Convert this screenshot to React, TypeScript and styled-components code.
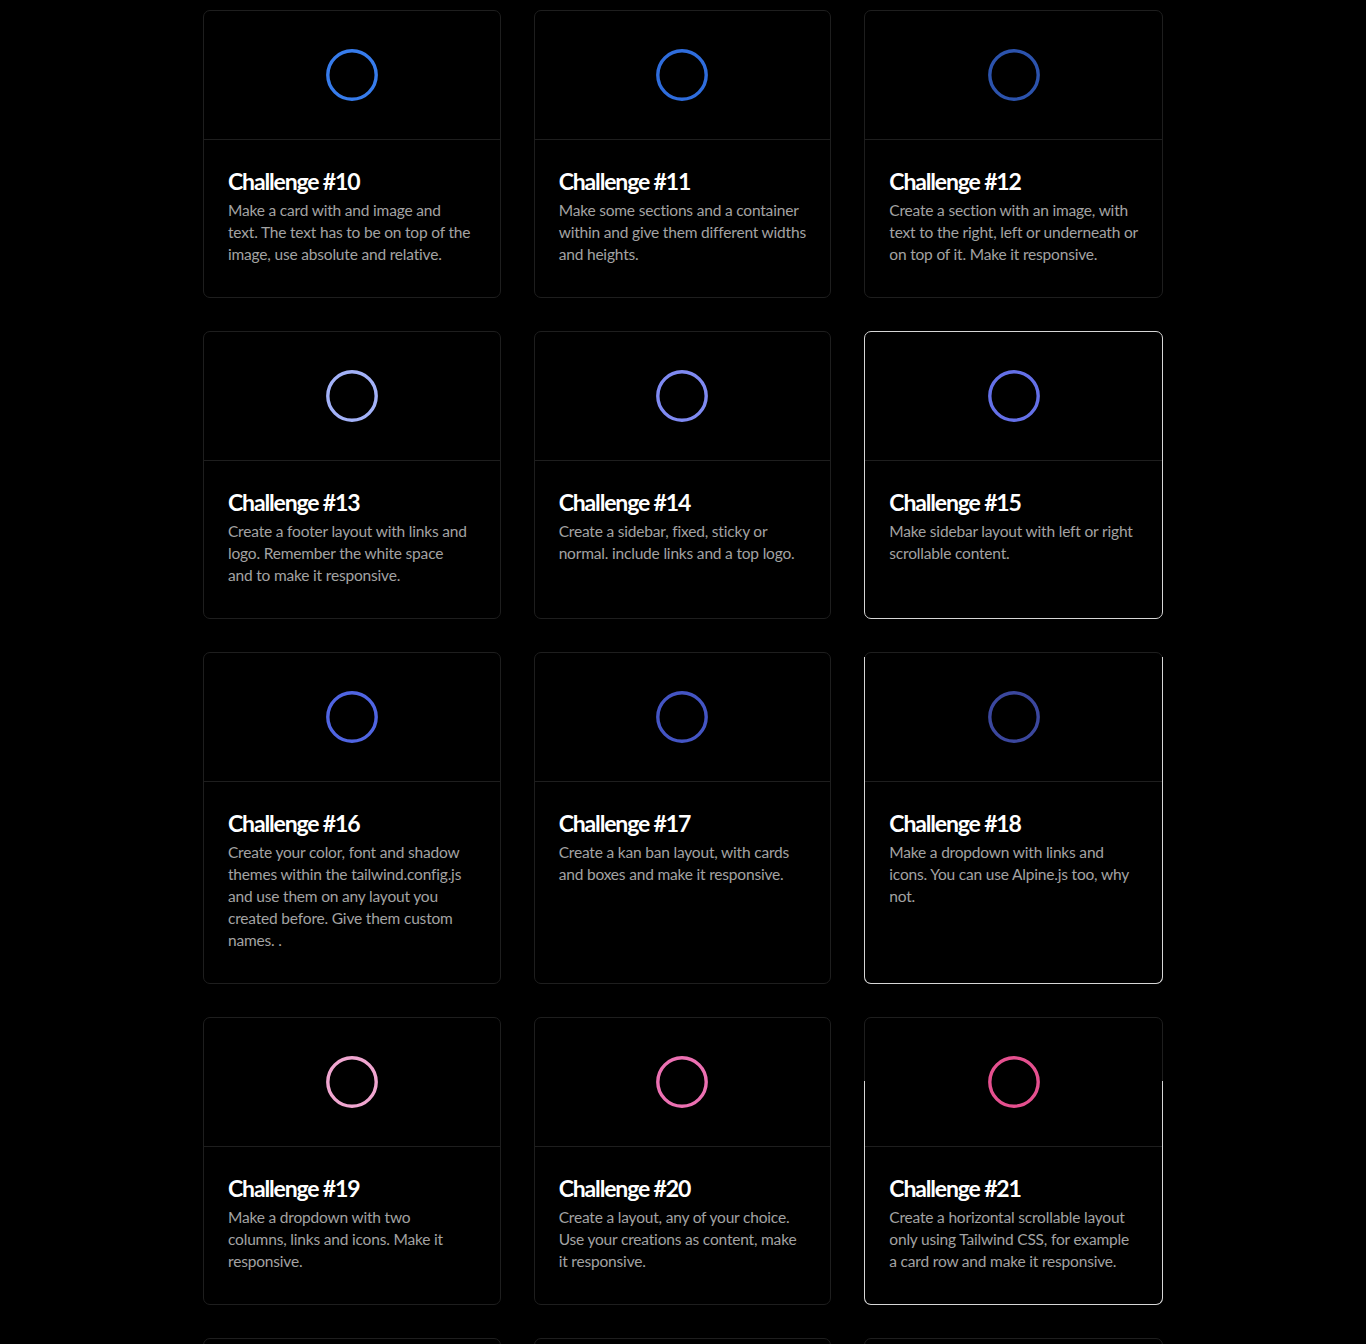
import React from "react";
import styled, { createGlobalStyle, css } from "styled-components";

const Global = createGlobalStyle`
  html, body { margin: 0; padding: 0; background: #000; }
  body { font-family: Lato, "Liberation Sans", sans-serif; -webkit-font-smoothing: antialiased; }
`;

const Grid = styled.div`
  width: 960px;
  margin: 10px auto 0;
  display: grid;
  grid-template-columns: repeat(3, 1fr);
  gap: 33px 33px;
  padding-bottom: 40px;
`;

type Ring = "full" | number | undefined;

const Card = styled.div<{ $ring?: Ring }>`
  position: relative;
  display: flex;
  flex-direction: column;
  background: #000;
  border: 1px solid ${(p) => (p.$ring === "full" ? "#d6d6d6" : "#1e1e1e")};
  border-radius: 7px;
  ${(p) =>
    typeof p.$ring === "number" &&
    css`
      &::after {
        content: "";
        position: absolute;
        top: ${p.$ring}px;
        left: -1px;
        right: -1px;
        bottom: -1px;
        border: 1px solid #d6d6d6;
        border-top: none;
        border-radius: 0 0 7px 7px;
        pointer-events: none;
      }
    `}
`;

const Media = styled.div`
  height: 128px;
  display: flex;
  align-items: center;
  justify-content: center;
  border-bottom: 1px solid #1e1e1e;
`;

const Body = styled.div`
  padding: 26px 24px 31px 24px;
  display: flex;
  flex-direction: column;
  gap: 3px;
`;

const Title = styled.h3`
  margin: 0;
  color: #fff;
  font-family: Lato, "Liberation Sans", sans-serif;
  font-weight: 700;
  font-size: 23px;
  line-height: 30px;
  letter-spacing: -0.05em;
`;

const Desc = styled.p`
  margin: 0 0 1px;
  color: #a3a3a3;
  font-family: Lato, "Liberation Sans", sans-serif;
  font-weight: 400;
  font-size: 15.5px;
  line-height: 22px;
  letter-spacing: -0.012em;
`;

const Line = styled.span`
  display: block;
  white-space: nowrap;
`;

const Ring = ({ color }: { color: string }) => (
  <svg width="52" height="52" viewBox="0 0 52 52">
    <circle cx="26" cy="26" r="24.2" fill="none" stroke={color} strokeWidth="3.4" />
  </svg>
);

const challenges: { n: number; lines: string[]; color: string; ring?: Ring }[] = [
  { n: 10, color: "#377cec", lines: ["Make a card with and image and", "text. The text has to be on top of the", "image, use absolute and relative."] },
  { n: 11, color: "#2f6ddd", lines: ["Make some sections and a container", "within and give them different widths", "and heights."] },
  { n: 12, color: "#2c53ad", lines: ["Create a section with an image, with", "text to the right, left or underneath or", "on top of it. Make it responsive."] },
  { n: 13, color: "#a3b2f8", lines: ["Create a footer layout with links and", "logo. Remember the white space", "and to make it responsive."] },
  { n: 14, color: "#7f8af2", lines: ["Create a sidebar, fixed, sticky or", "normal. include links and a top logo."] },
  { n: 15, color: "#6470e8", lines: ["Make sidebar layout with left or right", "scrollable content."], ring: "full" },
  { n: 16, color: "#5065e2", lines: ["Create your color, font and shadow", "themes within the tailwind.config.js", "and use them on any layout you", "created before. Give them custom", "names. ."] },
  { n: 17, color: "#4455c4", lines: ["Create a kan ban layout, with cards", "and boxes and make it responsive."] },
  { n: 18, color: "#3b479e", lines: ["Make a dropdown with links and", "icons. You can use Alpine.js too, why", "not."], ring: 4 },
  { n: 19, color: "#f0a6d0", lines: ["Make a dropdown with two", "columns, links and icons. Make it", "responsive."] },
  { n: 20, color: "#ec70b2", lines: ["Create a layout, any of your choice.", "Use your creations as content, make", "it responsive."] },
  { n: 21, color: "#e5508f", lines: ["Create a horizontal scrollable layout", "only using Tailwind CSS, for example", "a card row and make it responsive."], ring: 63 },
  { n: 22, color: "#e5508f", lines: [] },
  { n: 23, color: "#e5508f", lines: [] },
  { n: 24, color: "#e5508f", lines: [] },
];

export default function App() {
  return (
    <>
      <Global />
      <Grid>
        {challenges.map((c) => (
          <Card key={c.n} $ring={c.ring}>
            <Media>
              <Ring color={c.color} />
            </Media>
            <Body>
              <Title>Challenge #{c.n}</Title>
              {c.lines.length > 0 && (
                <Desc>
                  {c.lines.map((l, i) => (
                    <Line key={i}>{l}</Line>
                  ))}
                </Desc>
              )}
            </Body>
          </Card>
        ))}
      </Grid>
    </>
  );
}
